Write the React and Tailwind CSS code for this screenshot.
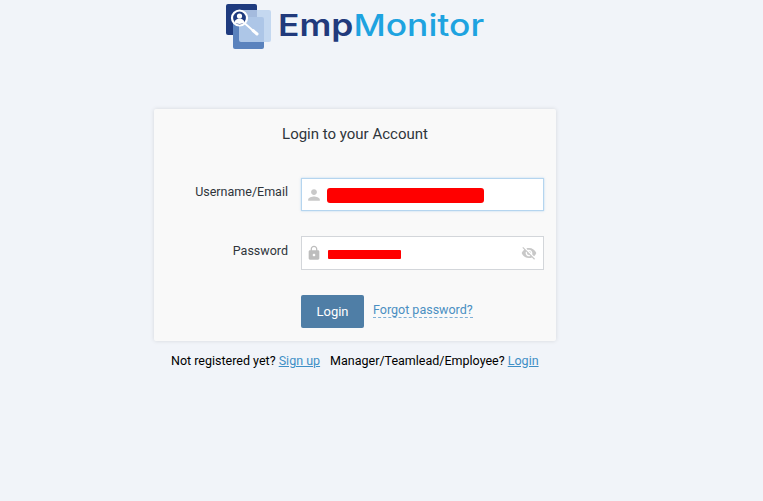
import React from 'react';

const Logo = () => (
    <div className="flex items-center h-[50px]">
        <svg width="50" height="50" viewBox="0 0 50 50" className="block shrink-0">
            <rect x="0" y="4" width="31" height="31" rx="2" fill="#1f3b7f" />
            <rect x="7" y="17" width="31" height="32" rx="2" fill="#5a82bd" />
            <rect x="13" y="10" width="32" height="32" rx="2" fill="#bcd2ee" fillOpacity="0.85" />
            <circle cx="13.500" cy="18" r="7.500" fill="#1f3b7f" stroke="#ffffff" strokeWidth="2.200" />
            <circle cx="13.500" cy="16" r="2.600" fill="#ffffff" />
            <path d="M8.500 22.500c.8-3 2.600-4 5-4s4.200 1 5 4c-1.400 1-3 1.400-5 1.400s-3.600-.4-5-1.400z" fill="#ffffff" />
            <path d="M19.500 24l8 7" stroke="#ffffff" strokeWidth="1.800" strokeLinecap="round" />
            <path d="M27 30.500l4 3.500" stroke="#ffffff" strokeWidth="3" strokeLinecap="round" />
        </svg>
        <span className="ml-[2px] inline-block origin-left scale-x-[1.18] text-[30px] leading-none font-semibold whitespace-nowrap font-['Inter',sans-serif]">
            <span className="text-[#213a7c]">Emp</span>
            <span className="text-[#1ea3e0] font-medium">Monitor</span>
        </span>
    </div>
);

const UserGlyph = () => (
    <svg width="14" height="14" viewBox="0 0 24 24" fill="#c9c9c9" className="shrink-0">
        <path d="M12 12c2.900 0 5-2.200 5-5s-2.100-5-5-5-5 2.200-5 5 2.100 5 5 5zm0 2.500c-3.300 0-10 1.700-10 5V22h20v-2.500c0-3.300-6.700-5-10-5z" />
    </svg>
);

const LockGlyph = () => (
    <svg width="16" height="18" viewBox="0 0 24 24" fill="#bdbdbd" className="shrink-0">
        <path d="M18 8h-1V6c0-2.800-2.200-5-5-5S7 3.200 7 6v2H6c-1.100 0-2 .9-2 2v10c0 1.100.9 2 2 2h12c1.100 0 2-.9 2-2V10c0-1.100-.9-2-2-2zm-6 9c-1.100 0-2-.9-2-2s.9-2 2-2 2 .9 2 2-.9 2-2 2zm3.100-9H8.900V6c0-1.700 1.400-3.100 3.100-3.100s3.100 1.400 3.100 3.100v2z" />
    </svg>
);

const EyeOffGlyph = () => (
    <svg width="16" height="16" viewBox="0 0 24 24" fill="#c8c8c8" className="ml-auto shrink-0">
        <path d="M12 7c2.760 0 5 2.240 5 5 0 .65-.13 1.260-.36 1.830l2.920 2.920c1.510-1.260 2.700-2.890 3.430-4.750-1.730-4.390-6-7.500-11-7.500-1.400 0-2.740.25-3.980.7l2.160 2.160C10.740 7.130 11.350 7 12 7zM2 4.270l2.280 2.280.46.46C3.080 8.300 1.780 10.020 1 12c1.730 4.390 6 7.500 11 7.500 1.550 0 3.030-.3 4.380-.84l.42.42L19.730 22 21 20.730 3.270 3 2 4.270zM7.530 9.800l1.550 1.550c-.05.21-.08.43-.08.650 0 1.660 1.340 3 3 3 .22 0 .44-.03.650-.08l1.550 1.550c-.67.33-1.410.53-2.200.53-2.760 0-5-2.240-5-5 0-.79.2-1.530.53-2.200zm4.310-.78l3.150 3.150.02-.16c0-1.660-1.340-3-3-3l-.17.010z" />
    </svg>
);

const App = () => {
    return (
        <div className="w-[763px] h-[501px] overflow-hidden bg-[#f1f4f9] font-['Roboto',sans-serif]">
            {/* Logo */}
            <div className="pl-[226px]">
                <Logo />
            </div>

            {/* Card */}
            <div className="ml-[154px] mt-[59px] w-[402px] h-[232px] bg-[#f9f9f9] rounded-[2px] shadow-[0_0_4px_rgba(0,0,0,0.12)] pt-[16px] pr-[12px]">
                <h1 className="text-center text-[15px] leading-[18px] text-[#2f353b] pl-[12px]">Login to your Account</h1>

                <div className="flex mt-[35px]">
                    <label className="w-[134px] text-right text-[12.5px] leading-[16px] text-[#2f353b] pt-[6px]">Username/Email</label>
                    <div className="ml-[13px] w-[243px] h-[33px] bg-white border border-[#b5d5ef] shadow-[0_0_2px_rgba(120,180,230,0.5)] flex items-center pl-[5px]">
                        <UserGlyph />
                        <div className="ml-[6px] mt-[1px] w-[157px] h-[15px] rounded-[3px] bg-[#ff0000]" />
                    </div>
                </div>

                <div className="flex mt-[25px]">
                    <label className="w-[134px] text-right text-[12.5px] leading-[16px] text-[#2f353b] pt-[7px]">Password</label>
                    <div className="ml-[13px] w-[243px] h-[34px] bg-white border border-[#d3d6da] flex items-center pl-[4px] pr-[6px]">
                        <LockGlyph />
                        <div className="ml-[6px] mt-[2px] w-[73px] h-[9px] rounded-[1px] bg-[#ff0000]" />
                        <EyeOffGlyph />
                    </div>
                </div>

                <div className="flex items-center mt-[25px] ml-[147px]">
                    <button className="w-[63px] h-[33px] bg-[#4f7ea6] rounded-[2px] text-white text-[13px]">Login</button>
                    <a className="ml-[9px] text-[12.5px] leading-[15px] text-[#4a8fc2] border-b border-dashed border-[#7fb0d6] -mt-[3px]">Forgot password?</a>
                </div>
            </div>

            {/* Footer links */}
            <p className="mt-[11px] ml-[171px] text-[12.5px] leading-[17px] text-black whitespace-nowrap">
                Not registered yet? <a className="text-[#3f8fc6] underline">Sign up</a>
                <span className="ml-[10px]">Manager/Teamlead/Employee?</span> <a className="text-[#3f8fc6] underline">Login</a>
            </p>
        </div>
    );
};

export default App;
